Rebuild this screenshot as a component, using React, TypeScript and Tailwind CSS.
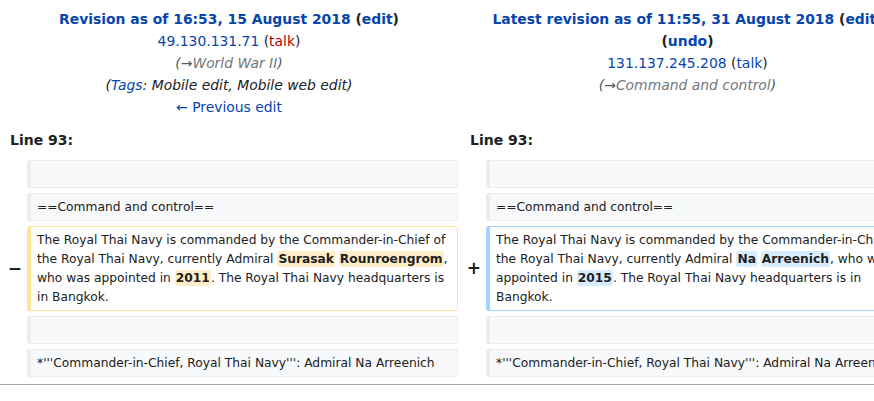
import type { ReactNode } from "react";

const link = "text-[#0645ad]";

const Box = ({ kind = "ctx", children }: { kind?: "ctx" | "del" | "ins"; children?: ReactNode }) => {
  const cls =
    kind === "del"
      ? "border-[#ffe49c] bg-white"
      : kind === "ins"
      ? "border-[#a3d3ff] bg-white"
      : "border-[#eaecf0] bg-[#f8f9fa]";
  return (
    <div
      className={`${cls} min-h-[28px] rounded-[3px] border border-l-4 pl-[6px] pr-[2px] py-[3.5px] text-[12.25px] leading-[19px] break-words`}
    >
      {children}
    </div>
  );
};

const Del = ({ children }: { children: ReactNode }) => (
  <span className="rounded-[2px] bg-[#feeec8] px-[1px] py-[1px] font-bold">{children}</span>
);
const Ins = ({ children }: { children: ReactNode }) => (
  <span className="rounded-[2px] bg-[#d8ecff] px-[1px] py-[1px] font-bold">{children}</span>
);

const Marker = ({ sign }: { sign?: string }) => (
  <div className="flex items-center justify-end pr-[5px] text-[17px] font-bold">{sign}</div>
);

export default function App() {
  return (
    <div className="h-[401px] w-[874px] overflow-hidden bg-white font-['DejaVu_Sans',sans-serif] text-[#202122]">
      <div className="grid w-[917px] grid-cols-[27px_431px_28px_431px] gap-y-[5px]">
        {/* headers */}
        <div className="col-span-2 pt-[8px] text-center text-[13.9px] leading-[22px]">
          <div className="font-bold">
            <span className={link}>Revision as of 16:53, 15 August 2018</span> (
            <span className={link}>edit</span>)
          </div>
          <div>
            <span className={link}>49.130.131.71</span> (<span className="text-[#ba0000]">talk</span>)
          </div>
          <div className="italic text-[#54595d]">
            (→<span className="text-[#72777d]">World War II</span>)
          </div>
          <div className="italic">
            (<span className={link}>Tags</span>: Mobile edit, Mobile web edit)
          </div>
          <div className={link}>← Previous edit</div>
        </div>
        <div className="col-span-2 pt-[8px] text-center text-[13.9px] leading-[22px]">
          <div className="font-bold">
            <span className={link}>Latest revision as of 11:55, 31 August 2018</span> (
            <span className={link}>edit</span>)
          </div>
          <div className="font-bold">
            (<span className={link}>undo</span>)
          </div>
          <div>
            <span className={link}>131.137.245.208</span> (<span className={link}>talk</span>)
          </div>
          <div className="italic text-[#54595d]">
            (→<span className="text-[#72777d]">Command and control</span>)
          </div>
        </div>

        {/* line numbers */}
        <div className="col-span-2 mt-[8px] mb-[5px] pl-[10px] text-[14px] font-bold leading-[19px]">Line 93:</div>
        <div className="col-span-2 mt-[8px] mb-[5px] pl-[12px] text-[14px] font-bold leading-[19px]">Line 93:</div>

        <Marker />
        <Box />
        <Marker />
        <Box />

        <Marker />
        <Box>==Command and control==</Box>
        <Marker />
        <Box>==Command and control==</Box>

        <Marker sign="−" />
        <Box kind="del">
          The Royal Thai Navy is commanded by the Commander-in-Chief of the Royal Thai Navy, currently Admiral{" "}
          <Del>Surasak</Del> <Del>Rounroengrom</Del>, who was appointed in <Del>2011</Del>. The Royal Thai Navy
          headquarters is in Bangkok.
        </Box>
        <Marker sign="+" />
        <Box kind="ins">
          The Royal Thai Navy is commanded by the Commander-in-Chief of the Royal Thai Navy, currently Admiral{" "}
          <Ins>Na</Ins> <Ins>Arreenich</Ins>, who was appointed in <Ins>2015</Ins>. The Royal Thai Navy headquarters
          is in Bangkok.
        </Box>

        <Marker />
        <Box />
        <Marker />
        <Box />

        <Marker />
        <Box>*'''Commander-in-Chief, Royal Thai Navy''': Admiral Na Arreenich</Box>
        <Marker />
        <Box>*'''Commander-in-Chief, Royal Thai Navy''': Admiral Na Arreenich</Box>
      </div>
      <div className="mt-[7px] w-[874px] border-b border-[#a2a9b1]" />
    </div>
  );
}
